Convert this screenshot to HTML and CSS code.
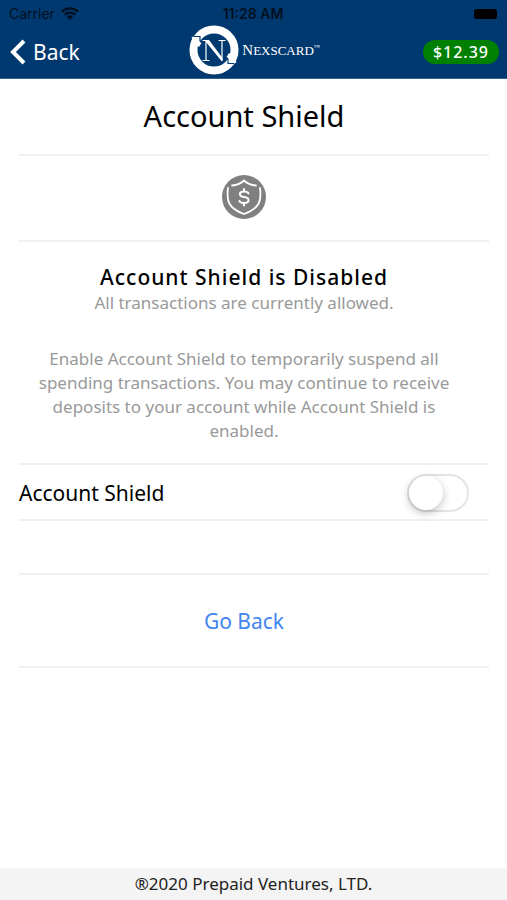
FILE: index.html
```html
<!DOCTYPE html>
<html lang="en">
<head>
<meta charset="utf-8">
<meta name="viewport" content="width=device-width, initial-scale=1">
<title>Account Shield</title>
<link rel="stylesheet" href="styles.css">
</head>
<body>
<header class="header">
  <div class="status">
    <span class="carrier">Carrier
      <svg class="wifi" viewBox="0 0 18 13" aria-hidden="true"><path d="M1 4.700a11.500 11.500 0 0 1 16 0M3.800 7.700a7.500 7.500 0 0 1 10.400 0" fill="none" stroke="currentColor" stroke-width="2.300"/><path d="M5.900 9.800a4.500 4.500 0 0 1 6.200 0L9 13z" fill="currentColor"/></svg>
    </span>
    <span class="time">11:28 AM</span>
    <span class="battery"></span>
  </div>
  <nav class="toolbar">
    <button class="back" type="button">
      <svg class="chevron" viewBox="0 0 16 26" aria-hidden="true"><path d="M14 2 3 13l11 11" fill="none" stroke="currentColor" stroke-width="4"/></svg>
      Back
    </button>
    <div class="brand">
      <svg class="emblem" viewBox="0 0 50 50" aria-hidden="true">
        <circle cx="25" cy="25" r="20.500" fill="none" stroke="#fff" stroke-width="8"/>
        <path d="M5 11.500h6v4.500l2.500 1.500-2 4" fill="none" stroke="#003970" stroke-width="1.200"/>
        <path d="M45 38.500h-6v-4.500l-2.500-1.500 2-4" fill="none" stroke="#003970" stroke-width="1.200"/>
        <path d="M2.500 12h7.500v4.500l2.500 1.500-2.500 4-5-4zM47.500 38h-7.500v-4.500l-2.500-1.500 2.500-4 5 4z" fill="#fff"/>
        <path d="M13.500 15.500h6M29.500 15.500h7M13.500 35.500h7M17 15.500v20M33 15.500v20" fill="none" stroke="#fff" stroke-width="1.200"/>
        <path d="M16.500 15h3.500L33.500 33v3h-1L17 17z" fill="#fff"/>
      </svg>
      <span class="wordmark">N<small>EXSCARD</small><sup>™</sup></span>
    </div>
    <span class="balance">$12.39</span>
  </nav>
</header>
<main class="content">
  <section class="row title-row"><h1>Account Shield</h1></section>
  <section class="row icon-row">
    <svg class="shield" viewBox="0 0 44 44" role="img" aria-label="Shield">
      <circle cx="22" cy="22" r="22" fill="#808080"/>
      <g fill="none" stroke="#fff" stroke-linecap="round" stroke-linejoin="round">
        <path d="M10 10.500c5-.5 9-2 12-5 3 3 7 4.500 12 5M6 13c-1.500 12-.5 20 16 26 16.500-6 17.500-14 16-26" stroke-width="1.800"/>
        <path d="M26.500 18.500c-.5-1.500-2-2-4.500-2-5.500 0-5.500 5 0 5.500 6 .5 6 6 0 6-2.500 0-4-.5-4.500-2M22 14v2.500M22 28v2.500" stroke-width="2"/>
      </g>
    </svg>
  </section>
  <section class="row info-row">
    <h2>Account Shield is Disabled</h2>
    <p>All transactions are currently allowed.</p>
    <p class="description">Enable Account Shield to temporarily suspend all spending transactions. You may continue to receive deposits to your account while Account Shield is enabled.</p>
  </section>
  <section class="row toggle-row">
    <label for="shield-toggle">Account Shield</label>
    <input class="toggle" id="shield-toggle" type="checkbox" role="switch">
  </section>
  <div class="row spacer-row"></div>
  <section class="row action-row"><a href="#">Go Back</a></section>
</main>
<footer class="footer">®2020 Prepaid Ventures, LTD.</footer>
</body>
</html>
```
FILE: styles.css
```css
* { box-sizing: border-box; }
body {
  margin: 0;
  min-height: 100vh;
  display: flex;
  flex-direction: column;
  background: #fff;
  color: #000;
  font-family: "Noto Sans", sans-serif;
}
h1, h2, p { margin: 0; font-weight: 400; }
.header {
  background: #003970;
  border-bottom: 1px solid #2c648f;
}
.status {
  display: grid;
  grid-template-columns: 1fr auto 1fr;
  align-items: center;
  height: 25px;
  padding: 2px 10px 0 9px;
  font: 14px/23px Inter, sans-serif;
  color: #00101f;
}
.carrier { display: flex; align-items: center; gap: 6px; }
.wifi { width: 18px; height: 13px; }
.time { font-weight: 600; }
.battery {
  justify-self: end;
  width: 23px;
  height: 10px;
  border-radius: 3px;
  background: #000;
}
.toolbar {
  display: grid;
  grid-template-columns: 1fr auto 1fr;
  align-items: center;
  height: 53px;
  padding: 0 8px 0 10px;
}
.back {
  display: flex;
  align-items: center;
  justify-self: start;
  gap: 7px;
  padding: 0;
  border: 0;
  background: none;
  color: #fff;
  font: 21px/28px "Noto Sans", sans-serif;
}
.chevron { width: 16px; height: 26px; }
.brand { display: flex; align-items: center; align-self: start; gap: 3px; color: #fff; }
.emblem { width: 50px; height: 50px; }
.wordmark { font: 15px/20px "Liberation Serif", serif; }
.wordmark small { font-size: 13px; }
.wordmark sup { font-size: 6px; line-height: 6px; }
.balance {
  justify-self: end;
  padding: 0 10px;
  border-radius: 12px;
  background: #008000;
  color: #fff;
  font-size: 16px;
  font-weight: 500;
  line-height: 24px;
  letter-spacing: 1px;
}
.content { flex: 1; padding: 0 18px 0 19px; }
.row {
  padding-right: 20px;
  border-bottom: 2px solid #f0f0f0;
  text-align: center;
}
.title-row { padding-top: 17px; padding-bottom: 18px; }
.title-row h1 { font-size: 29px; line-height: 40px; }
.icon-row { padding-top: 19px; padding-bottom: 21px; }
.shield { display: block; width: 44px; height: 44px; margin: 0 auto; }
.info-row { padding-top: 21px; padding-bottom: 20px; color: #999; }
.info-row h2 {
  color: #000;
  font-size: 21px;
  font-weight: 500;
  line-height: 28px;
  letter-spacing: 1px;
}
.info-row p { font-size: 17px; line-height: 24px; }
.info-row .description { margin-top: 32px; padding: 0 16px; }
.toggle-row {
  display: flex;
  align-items: center;
  justify-content: space-between;
  height: 56px;
  padding-top: 2px;
  font-size: 21px;
}
.toggle {
  appearance: none;
  width: 62px;
  height: 38px;
  margin: 0;
  border: 2px solid #e4e4e4;
  border-radius: 19px;
  background: #fff;
}
.toggle::before {
  content: "";
  display: block;
  width: 34px;
  height: 34px;
  border-radius: 50%;
  background: #fff;
  box-shadow: 0 3px 8px rgba(0, 0, 0, .25);
}
.toggle:checked { background: #4a86e8; }
.toggle:checked::before { margin-left: auto; }
.spacer-row { height: 54px; }
.action-row { padding-top: 32px; padding-bottom: 31px; }
.action-row a {
  display: block;
  color: #4286f0;
  font-size: 21px;
  line-height: 28px;
  text-decoration: none;
}
.footer {
  background: #f4f4f4;
  color: #222;
  font-size: 17px;
  line-height: 32px;
  text-align: center;
}
```
